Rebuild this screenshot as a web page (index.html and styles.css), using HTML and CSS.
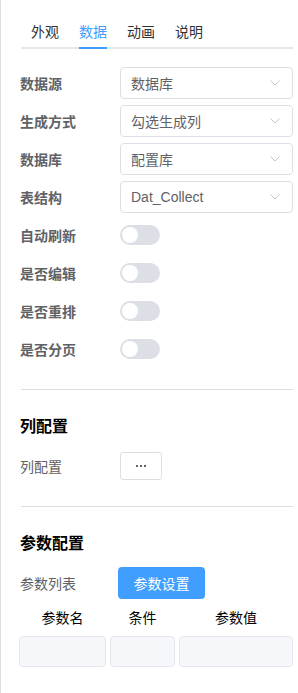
FILE: index.html
```html
<!DOCTYPE html>
<html lang="zh">
<head>
<meta charset="utf-8">
<link rel="stylesheet" href="styles.css">
</head>
<body>
<div class="panel">
  <div class="tabs">
    <div class="tab">外观</div>
    <div class="tab active">数据</div>
    <div class="tab">动画</div>
    <div class="tab">说明</div>
  </div>

  <div class="form">
    <div class="row">
      <div class="label">数据源</div>
      <div class="select"><span>数据库</span><svg class="arrow" width="10" height="6" viewBox="0 0 10 6"><path d="M0.5 0.5 L5 5 L9.5 0.5" fill="none" stroke="#c0c4cc" stroke-width="1"/></svg></div>
    </div>
    <div class="row">
      <div class="label">生成方式</div>
      <div class="select"><span>勾选生成列</span><svg class="arrow" width="10" height="6" viewBox="0 0 10 6"><path d="M0.5 0.5 L5 5 L9.5 0.5" fill="none" stroke="#c0c4cc" stroke-width="1"/></svg></div>
    </div>
    <div class="row">
      <div class="label">数据库</div>
      <div class="select"><span>配置库</span><svg class="arrow" width="10" height="6" viewBox="0 0 10 6"><path d="M0.5 0.5 L5 5 L9.5 0.5" fill="none" stroke="#c0c4cc" stroke-width="1"/></svg></div>
    </div>
    <div class="row">
      <div class="label">表结构</div>
      <div class="select"><span class="latin">Dat_Collect</span><svg class="arrow" width="10" height="6" viewBox="0 0 10 6"><path d="M0.5 0.5 L5 5 L9.5 0.5" fill="none" stroke="#c0c4cc" stroke-width="1"/></svg></div>
    </div>
    <div class="row">
      <div class="label">自动刷新</div>
      <div class="switch"><span class="knob"></span></div>
    </div>
    <div class="row">
      <div class="label">是否编辑</div>
      <div class="switch"><span class="knob"></span></div>
    </div>
    <div class="row">
      <div class="label">是否重排</div>
      <div class="switch"><span class="knob"></span></div>
    </div>
    <div class="row">
      <div class="label">是否分页</div>
      <div class="switch"><span class="knob"></span></div>
    </div>
  </div>

  <div class="divider"></div>

  <h3 class="heading">列配置</h3>
  <div class="row">
    <div class="label light">列配置</div>
    <div class="more-btn"><svg width="10" height="2" viewBox="0 0 10 2"><rect x="0" y="0" width="2" height="2" fill="#606266"/><rect x="4" y="0" width="2" height="2" fill="#606266"/><rect x="8" y="0" width="2" height="2" fill="#606266"/></svg></div>
  </div>

  <div class="divider"></div>

  <h3 class="heading">参数配置</h3>
  <div class="row">
    <div class="label light">参数列表</div>
    <div class="primary-btn">参数设置</div>
  </div>

  <div class="param-table">
    <div class="th">参数名</div>
    <div class="th">条件</div>
    <div class="th">参数值</div>
    <div class="cell"></div>
    <div class="cell"></div>
    <div class="cell"></div>
  </div>
</div>
</body>
</html>
```

FILE: styles.css
```css
* { box-sizing: border-box; }
html, body { margin: 0; padding: 0; background: #fff; }
body {
  font-family: "Noto Sans CJK SC", "Liberation Sans", sans-serif;
  font-size: 14px;
  color: #606266;
}
.panel {
  width: 298px;
  min-height: 693px;
  border-left: 1px solid #dcdfe6;
  padding: 13px 5px 0 19px;
}
.tabs {
  display: flex;
  position: relative;
  margin-left: 1px;
  margin-bottom: 18px;
}
.tabs::after {
  content: "";
  position: absolute;
  left: 0; right: 0; bottom: 0;
  height: 2px;
  background: #e4e7ed;
}
.tab {
  position: relative;
  padding: 0 10px;
  line-height: 36px;
  height: 36px;
  color: #303133;
}
.tab.active { color: #409eff; }
.tab.active::after {
  content: "";
  position: absolute;
  left: 10px; right: 10px; bottom: 0;
  height: 2px;
  background: #409eff;
  z-index: 1;
}
.row {
  display: flex;
  align-items: center;
  height: 32px;
  margin-bottom: 6px;
}
.label {
  width: 100px;
  flex: none;
  font-weight: 700;
  color: #606266;
  line-height: 20px;
}
.label.light { font-weight: 400; }
.select {
  flex: 1;
  height: 32px;
  border: 1px solid #dcdfe6;
  border-radius: 4px;
  display: flex;
  align-items: center;
  justify-content: space-between;
  padding: 0 12px 0 10px;
  color: #606266;
  line-height: 20px;
}
.latin { font-family: "Liberation Sans", sans-serif; }
.switch {
  width: 40px;
  height: 20px;
  border-radius: 10px;
  background: #dcdfe6;
  display: flex;
  align-items: center;
  padding: 0 2px;
}
.knob {
  width: 16px;
  height: 16px;
  border-radius: 50%;
  background: #fff;
}
.divider {
  height: 1px;
  background: #dcdfe6;
  margin: 24px 0 23px 1px;
}
.heading {
  margin: 0 0 13px;
  font-size: 16px;
  line-height: 24px;
  font-weight: 700;
  color: #000;
}
.more-btn {
  width: 42px;
  height: 28px;
  border: 1px solid #dcdfe6;
  border-radius: 3px;
  display: flex;
  align-items: center;
  justify-content: center;
}
.primary-btn {
  margin-left: -2px;
  width: 87px;
  height: 32px;
  border-radius: 4px;
  background: #409eff;
  color: #fff;
  display: flex;
  align-items: center;
  justify-content: center;
  line-height: 20px;
}
.param-table {
  display: grid;
  grid-template-columns: 87px 65px 1fr;
  column-gap: 4px;
  margin-left: -1px;
  margin-top: 2px;
}
.th {
  text-align: center;
  color: #000;
  line-height: 24px;
  height: 31px;
}
.cell {
  height: 31px;
  background: #f5f7fa;
  border: 1px solid #e4e7ed;
  border-radius: 4px;
}
```
